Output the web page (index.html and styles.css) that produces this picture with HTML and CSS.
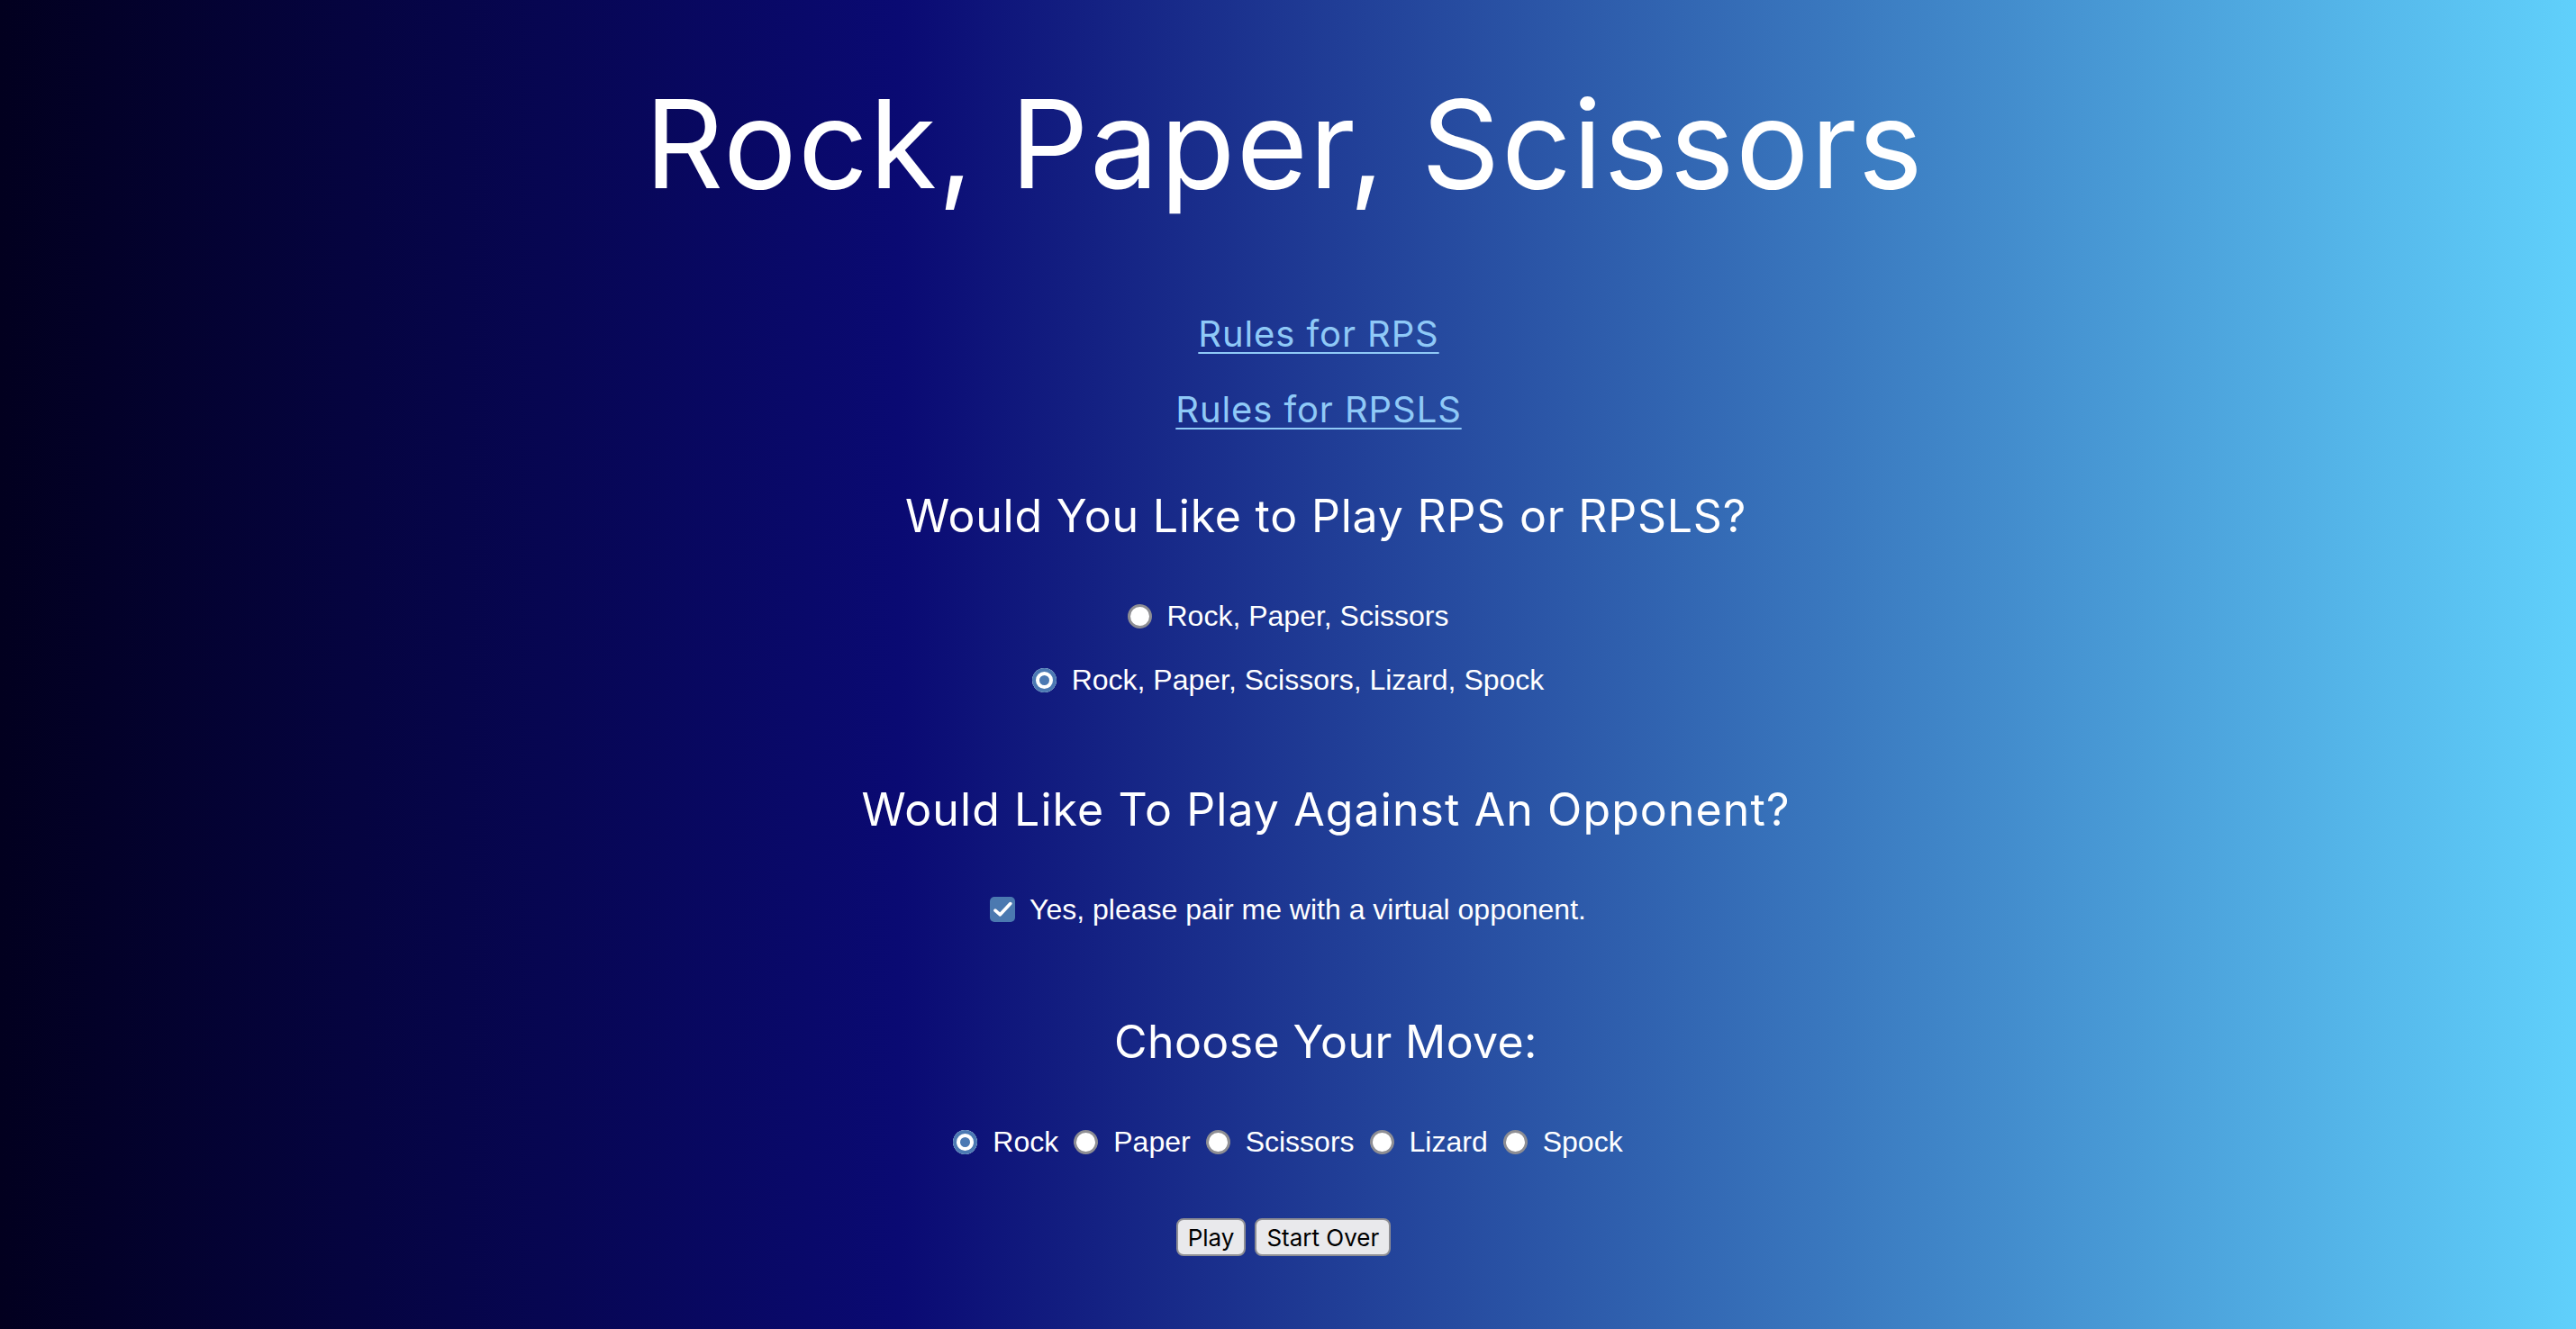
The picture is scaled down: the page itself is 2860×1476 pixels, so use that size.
FILE: index.html
```html
<!DOCTYPE html>
<html lang="en">
<head>
<meta charset="utf-8">
<title>Rock, Paper, Scissors</title>
<link rel="stylesheet" href="styles.css">
</head>
<body>
<main class="page">
  <h1 class="title">Rock, Paper, Scissors</h1>
  <ul class="rules">
    <li><a href="#rps">Rules for RPS</a></li>
    <li><a href="#rpsls">Rules for RPSLS</a></li>
  </ul>

  <h2 class="question q-mode">Would You Like to Play RPS or RPSLS?</h2>
  <div class="options">
    <label class="option"><input class="radio" type="radio" name="mode"><span>Rock, Paper, Scissors</span></label>
    <label class="option"><input class="radio" type="radio" name="mode" checked><span>Rock, Paper, Scissors, Lizard, Spock</span></label>
  </div>

  <h2 class="question q-opponent">Would Like To Play Against An Opponent?</h2>
  <label class="option check-row"><input class="check" type="checkbox" checked><span>Yes, please pair me with a virtual opponent.</span></label>

  <h2 class="question q-move">Choose Your Move:</h2>
  <div class="moves">
    <label class="option"><input class="radio" type="radio" name="move" checked><span>Rock</span></label>
    <label class="option"><input class="radio" type="radio" name="move"><span>Paper</span></label>
    <label class="option"><input class="radio" type="radio" name="move"><span>Scissors</span></label>
    <label class="option"><input class="radio" type="radio" name="move"><span>Lizard</span></label>
    <label class="option"><input class="radio" type="radio" name="move"><span>Spock</span></label>
  </div>

  <div class="buttons">
    <button class="btn" type="button">Play</button>
    <button class="btn" type="button">Start Over</button>
  </div>
</main>
</body>
</html>
```
FILE: styles.css
```css
html, body {
  margin: 0;
  padding: 0;
}

body {
  min-height: 100vh;
  background: linear-gradient(90deg, #02001f 0%, #0a0a73 35%, #60d0fb 100%);
  color: #fff;
  font-family: "Liberation Sans", Arial, sans-serif;
}

.page {
  display: flex;
  flex-direction: column;
  align-items: center;
  padding-top: 92px;
  text-align: center;
}

.title {
  margin: 0;
  padding-right: 8px;
  font-family: "Inter", "Liberation Sans", sans-serif;
  font-weight: 400;
  font-size: 136px;
  line-height: 135px;
  letter-spacing: 1.5px;
}

.rules {
  list-style: none;
  margin: 119px 0 0;
  padding: 0 0 0 68px;
  display: flex;
  flex-direction: column;
  align-items: center;
  gap: 34px;
}

.rules li {
  font-family: "Inter", "Liberation Sans", sans-serif;
  font-size: 40px;
  line-height: 50px;
  letter-spacing: 0.9px;
}

.rules a {
  color: #8fc9f7;
  text-decoration: underline;
  text-decoration-thickness: 2px;
  text-underline-offset: 6px;
}

.question {
  margin: 0;
  padding-left: 84px;
  font-family: "Inter", "Liberation Sans", sans-serif;
  font-weight: 400;
  font-size: 50px;
  line-height: 60px;
  letter-spacing: 0.8px;
}

.q-mode { margin-top: 63px; }
.q-opponent { margin-top: 94px; letter-spacing: 1.1px; }
.q-move { margin-top: 97px; letter-spacing: 0.4px; }

.options {
  margin-top: 61px;
  display: flex;
  flex-direction: column;
  align-items: center;
  gap: 31px;
}

.option {
  display: flex;
  align-items: center;
  gap: 17px;
  font-size: 32px;
  line-height: 40px;
  height: 40px;
}

.check-row {
  margin-top: 61px;
  gap: 16px;
}

.moves {
  margin-top: 61px;
  display: flex;
  align-items: center;
  gap: 17px;
}

.radio {
  appearance: none;
  -webkit-appearance: none;
  box-sizing: border-box;
  margin: 0;
  width: 27px;
  height: 27px;
  border-radius: 50%;
  background: #fff;
  border: 3px solid #8e8e93;
  flex: none;
}

.radio:checked {
  border: none;
  background: #4b79b3;
  box-shadow: inset 0 0 0 4px #4b79b3, inset 0 0 0 8px #fff;
}

.check {
  appearance: none;
  -webkit-appearance: none;
  box-sizing: border-box;
  margin: 0;
  width: 28px;
  height: 28px;
  border-radius: 5px;
  background-color: #4b79b0;
  background-image: url("data:image/svg+xml,%3Csvg xmlns='http://www.w3.org/2000/svg' viewBox='0 0 28 28'%3E%3Cpath d='M6 15.2 L11.4 19.8 L22.8 7.6' fill='none' stroke='%23fff' stroke-width='3.6' stroke-linecap='round' stroke-linejoin='round'/%3E%3C/svg%3E");
  background-size: 28px 28px;
  flex: none;
}

.buttons {
  margin-top: 65px;
  padding-right: 10px;
  display: flex;
  gap: 10px;
}

.btn {
  box-sizing: border-box;
  height: 42px;
  margin: 0;
  padding: 0 11px;
  font-family: "Inter", "Liberation Sans", sans-serif;
  font-size: 26px;
  color: #000;
  background: #e9e9ec;
  border: 2px solid #8f8f94;
  border-radius: 8px;
}
```
